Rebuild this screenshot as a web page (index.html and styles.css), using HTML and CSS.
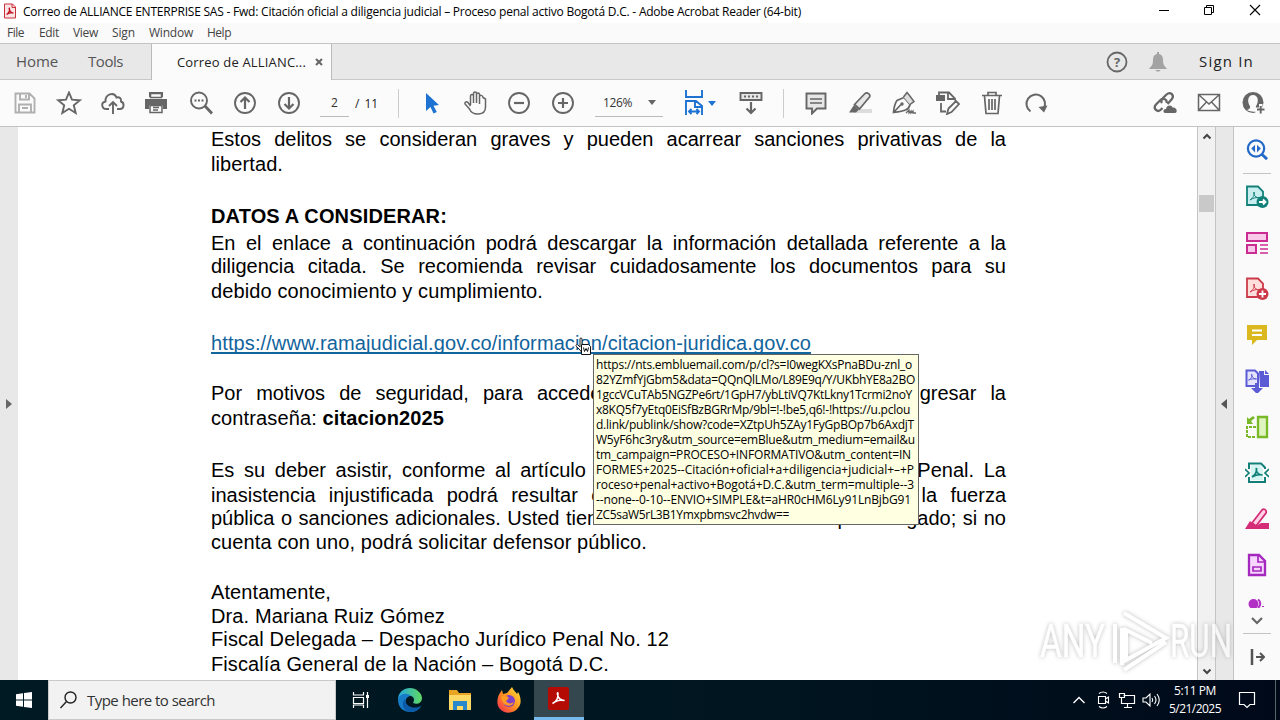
FILE: index.html
```html
<!DOCTYPE html>
<html lang="es">
<head>
  <meta charset="UTF-8">
  <title>Correo de ALLIANCE ENTERPRISE SAS - Adobe Acrobat Reader (64-bit)</title>
  <link rel="stylesheet" href="styles.css">
</head>
<body>
  <div class="desktop">
    <header class="titlebar">
      <svg class="app-icon" width="14" height="16" viewBox="0 0 14 16"><path d="M1.500 1h8l3 3v11h-11z" fill="#fbe4e4" stroke="#c8303a"/><path d="M9 1v3.500h3.500" fill="none" stroke="#c8303a"/><path d="M3.500 11.500c2-1 3.500-4 3-6-.2-1-.8 0 0 1.500.8 2 2 3 4 3-2-.8-5 .2-7 1.500z" fill="none" stroke="#c01020" stroke-width="1.200"/></svg>
      <span class="title" data-width="778">Correo de ALLIANCE ENTERPRISE SAS - Fwd: Citación oficial a diligencia judicial – Proceso penal activo Bogotá D.C. - Adobe Acrobat Reader (64-bit)</span>
      <div class="window-buttons">
        <svg width="46" height="22"><path d="M18 10.500h10" stroke="#000"/></svg>
        <svg width="46" height="22"><path d="M17.500 7.500h7v7h-7zM19.500 7.500v-2h7v7h-2" fill="none" stroke="#000"/></svg>
        <svg width="46" height="22"><path d="M17 5l10 10M27 5L17 15" stroke="#000" stroke-width="1.100"/></svg>
      </div>
    </header>

    <nav class="menubar">
      <span class="m-file" data-width="17">File</span>
      <span class="m-edit" data-width="20">Edit</span>
      <span class="m-view" data-width="25">View</span>
      <span class="m-sign" data-width="23">Sign</span>
      <span class="m-window" data-width="44">Window</span>
      <span data-width="24">Help</span>
    </nav>

    <div class="tabs">
      <div class="tab-home"><span data-width="42">Home</span></div>
      <div class="tab-tools"><span data-width="35">Tools</span></div>
      <div class="tab-doc"><span data-width="129">Correo de ALLIANC...</span><svg width="8" height="8" viewBox="0 0 8 8"><path d="M1 1l6 6M7 1L1 7" stroke="#666" stroke-width="2"/></svg></div>
      <div class="account">
        <svg width="22" height="22" viewBox="0 0 22 22"><circle cx="11" cy="11" r="9.500" fill="none" stroke="#666" stroke-width="1.800"/><text x="11" y="15.500" text-anchor="middle" class="question">?</text></svg>
        <svg class="bell" width="18" height="20" viewBox="0 0 18 20"><path d="M8 0h2v2c3 .5 4 3 4 6 0 4 1 6 3.500 8v1H.5v-1C3 14 4 12 4 8c0-3 1-5.500 4-6zM6.500 18h5c-.5 2-4.500 2-5 0z" fill="#a3a3a3"/></svg>
        <span class="sign-in" data-width="55">Sign In</span>
      </div>
    </div>

    <div class="toolbar">
      <svg class="tool light" viewBox="0 0 24 24"><path d="M2.500 2.500h14l5 5v14h-19zM7 2.500v6h9v-6M6 21.500v-8h12v8M13 4v3M9 17h6"/></svg>
      <svg class="tool" viewBox="0 0 24 24"><path d="M12 1.500l3 7.200 7.800.6-6 5 1.900 7.700-6.700-4.200L5.300 22l1.900-7.700-6-5 7.800-.6z"/></svg>
      <svg class="tool" viewBox="0 0 24 24"><path d="M8 18H5.500C.5 18-.5 11.500 4.500 10.500 4 3 13 .5 15.500 6.500c3-1 5 1 4.500 4 4 1.500 3 7.500-1 7.500H16M12 23V11.500M8 15l4-4 4 4"/></svg>
      <svg class="tool" viewBox="1 0 24 24"><path class="solid" d="M5 1h14v5H5zM1 8h22v10h-4v-4H5v4H1z"/><path d="M6 14.500h12v7H6zM9 16.500h6M9 19h5" stroke-width="1.500"/><path d="M6.500 2.500h11v4h-11z" fill="#fbfbfb" stroke-width="1.500"/></svg>
      <svg class="tool" viewBox="0 0 24 24"><circle cx="10" cy="9.500" r="8"/><path d="M16 15l7 7.500" stroke-width="2.800"/><path class="solid" d="M5.500 8.500h2v2h-2zM9 8.500h2v2H9zM12.500 8.500h2v2h-2z"/></svg>
      <svg class="tool" viewBox="0 0 24 24"><circle cx="12" cy="12" r="10"/><path d="M12 18V6.500M7.500 11L12 6.500l4.500 4.500" stroke-width="2.200"/></svg>
      <svg class="tool" viewBox="0 0 24 24"><circle cx="12" cy="12" r="10"/><path d="M12 6v11.500M7.500 13l4.500 4.500 4.500-4.500" stroke-width="2.200"/></svg>
      <div class="page-field">2</div>
      <div class="page-total"><span>/</span><span>11</span></div>
      <div class="separator"></div>
      <svg class="tool select" viewBox="0 0 24 24"><path d="M7 2l13 12-5.500.7 3.300 6.300-3.300 1.500-3-6.500L7 20z" fill="#1d72d2"/></svg>
      <svg class="tool" viewBox="0 0 24 24"><path d="M7 14V5c0-2 3-2 3 0v7V2.500c0-2 3-2 3 0V12 3.500c0-2 3-2 3 0V13 6c0-2.500 3.500-2 3.500.500L22 8v8c0 9-13 9-16 2L1.500 13C1 10.500 3.500 10.500 4.500 11.500L7 15" transform="translate(.5)" stroke-width="1.500"/></svg>
      <svg class="tool" viewBox="0 0 24 24"><circle cx="12" cy="12" r="10"/><path d="M7 12h10" stroke-width="2.200"/></svg>
      <svg class="tool" viewBox="0 0 24 24"><circle cx="12" cy="12" r="10"/><path d="M7 12h10M12 7v10" stroke-width="2.200"/></svg>
      <div class="zoom-field"><span data-width="29">126%</span><i class="caret"></i></div>
      <div class="fit">
        <svg width="22" height="26" viewBox="0 0 22 26"><path d="M2 0v7h16V0M2 25V11h10l6 5v9M11 11v6h7M5 21.500h10M7.500 19L5 21.500 7.500 24M12.500 19l2.500 2.500-2.500 2.500" fill="none" stroke="#1d72d2" stroke-width="1.900"/></svg>
        <i class="caret blue"></i>
      </div>
      <svg class="tool scrolling" viewBox="0 0 24 24"><path d="M1.500 2h21v7h-21z" fill="#e6e6e6"/><path d="M5 5.500h14" stroke-dasharray="2 2"/><path d="M12 11v11M7.500 17.500L12 22l4.500-4.500" stroke-width="2.200"/></svg>
      <div class="separator second"></div>
      <svg class="tool" viewBox="0 0 24 24"><path d="M2.500 2.500h19v15H13L8 22.500v-5H2.500z" fill="#e6e6e6"/><path d="M6 8h12M6 12h12" stroke-width="1.500"/></svg>
      <svg class="tool" viewBox="0 0 24 24"><path class="shade" d="M9 18h15v4H5z"/><path d="M6.500 13.500L17 2.500c2-2 6 1 4.500 3.500L11.500 18z" fill="#e6e6e6" stroke-width="1.700"/><path class="solid" d="M6 14l5 4.500L8 21.500H1z"/></svg>
      <svg class="tool" viewBox="0 0 24 24"><path d="M1.500 21.500C2 16 3 12 5 9.500l7-3 6 7c-1 5-4 6.500-16.500 8zM2 21l7-7.500" stroke-width="1.700"/><circle class="solid" cx="10" cy="13" r="1.700"/><path d="M11.500 6L15 1.500l2.500 3 4.500 6-4 3" fill="#ddd" stroke-width="1.500"/><path d="M14 22l3-3v3l2-2v2l2-2v2h3" stroke-width="1.300"/></svg>
      <svg class="tool" viewBox="0 0 24 24"><path class="solid" d="M0 4h9v6H0z"/><path d="M3 4V1.500h10l6 6v2M12 2v6h7M5 12v8.500h5M11 23l1.500-5.500L20 10l3 3-7.500 8z" stroke-width="1.800"/></svg>
      <svg class="tool" viewBox="0 0 24 24"><path d="M4.500 5l1.500 17.500h12L19.500 5M2 4.500h20M8 4V1.500h8V4M9 8v11M12 8v11M15 8v11" stroke-width="1.700"/></svg>
      <svg class="tool" viewBox="0 0 24 24"><path d="M6.500 20.500A9.300 9.300 0 1 1 19.500 18" stroke-width="2"/><path class="solid" d="M14.500 16L23.500 14.500l-3.500 7z"/></svg>
      <div class="tools-right">
        <svg class="tool" viewBox="0 0 24 24"><path d="M9.500 17l-1.500 1.500c-3.500 3.500-8.500-1-5-5l4.500-4.500c3-2.500 7-.5 6 3M9 12c-1.500-2-.5-3.500 1-5l3.500-3.500c4-3.500 8.500 1 5 5L14.500 13" stroke-width="2.300"/><path class="solid" d="M12.500 22c-3 0-2.500-4.500.5-4 .5-4.500 6-4.500 6.500-1.500C24 15.500 25 22 22 22z"/></svg>
        <svg class="tool" viewBox="0 0 24 24"><path d="M1.500 3.500h21v16h-21zM2 4l10 9L22 4M2 19l7.500-8M22 19l-7.500-8" stroke-width="1.500"/></svg>
        <svg class="tool" viewBox="0 0 24 24"><circle class="solid" cx="12" cy="11.500" r="10.500"/><path class="paper" d="M12 4c5.500 0 6 7 3 11-.5 1.500 0 2.500 1.500 3v2c-3 1-7 1-10.500-1 2.500-1 3.500-1.500 3-4C6 11 6.500 4 12 4zM14.500 16.500h3.500V13h3.500v3.500H25V24H14.500z"/><path d="M16 18.500h7.500M19.700 15v7.500"/></svg>
      </div>
    </div>

    <main class="content">
      <aside class="rail left"><i class="arrow-right"></i></aside>
      <article class="page">
        <p class="line full">Estos delitos se consideran graves y pueden acarrear sanciones privativas de la</p>
        <p class="line last"><span data-width="72">libertad.</span></p>

        <p class="line h27"><b data-width="236">DATOS A CONSIDERAR:</b></p>
        <p class="line full h23">En el enlace a continuación podrá descargar la información detallada referente a la</p>
        <p class="line full">diligencia citada. Se recomienda revisar cuidadosamente los documentos para su</p>
        <p class="line last"><span data-width="332">debido conocimiento y cumplimiento.</span></p>

        <p class="line link-line"><a class="link" data-width="600">https://www.ramajudicial.gov.co/informacion/citacion-juridica.gov.co</a></p>

        <p class="line full">Por motivos de seguridad, para acceder al documento deberá usted ingresar la</p>
        <p class="line last"><span data-width="233">contraseña: <b>citacion2025</b></span></p>

        <p class="line full">Es su deber asistir, conforme al artículo 175 del Código de Procedimiento Penal. La</p>
        <p class="line full h23">inasistencia injustificada podrá resultar en su conducción por medio de la fuerza</p>
        <p class="line full h24">pública o sanciones adicionales. Usted tiene derecho a estar asistido por abogado; si no</p>
        <p class="line last"><span data-width="436">cuenta con uno, podrá solicitar defensor público.</span></p>

        <p class="line h24 closing"><span data-width="120">Atentamente,</span></p>
        <p class="line h23"><span data-width="234">Dra. Mariana Ruiz Gómez</span></p>
        <p class="line"><span data-width="458">Fiscal Delegada – Despacho Jurídico Penal No. 12</span></p>
        <p class="line"><span data-width="398">Fiscalía General de la Nación – Bogotá D.C.</span></p>
      </article>
      <div class="scrollbar">
        <svg width="10" height="7" viewBox="0 0 10 7"><path d="M1.500 5.500L5 2l3.500 3.500" fill="none" stroke="#444" stroke-width="2"/></svg>
        <div class="thumb"></div>
        <svg class="down" width="10" height="7" viewBox="0 0 10 7"><path d="M1.500 1.500L5 5l3.500-3.500" fill="none" stroke="#444" stroke-width="2"/></svg>
      </div>
      <aside class="rail right"><i class="arrow-left"></i></aside>
      <aside class="side-tools">
        <svg class="side first" viewBox="0 0 24 24"><circle cx="11" cy="11" r="8.500" fill="none" stroke="#2468c8" stroke-width="2.300"/><path d="M17 17l5.500 5" stroke="#2468c8" stroke-width="3"/><path d="M10 7v8l-4-4zM12 7v8l4-4z" fill="#2468c8"/></svg>
        <svg class="side" viewBox="0 0 24 24"><path d="M2 1.500h11l5 5V20H2z" fill="#c9eef0" stroke="#128078" stroke-width="1.800"/><path d="M5 15c3-2 5-5 4-8-1 3 2 6 6 6-4-1-7 0-10 2z" fill="none" stroke="#128078"/><circle cx="17.500" cy="17" r="6" fill="#128078"/><path d="M14 17h6M18 14.500l2.500 2.500-2.500 2.500" fill="none" stroke="#fff" stroke-width="1.800"/></svg>
        <svg class="side" viewBox="0 0 24 24"><path d="M2 2h20v8H2zM2 14h9v8H2z" fill="#f9c9e9" stroke="#cb2c92" stroke-width="2"/><path d="M15 14h8M15 18h8M15 22h8" stroke="#cb2c92" stroke-width="1.300"/></svg>
        <svg class="side" viewBox="0 0 24 24"><path d="M2 1.500h11l5 5V20H2z" fill="#ffdedc" stroke="#cc3a49" stroke-width="1.800"/><path d="M5 15c3-2 5-5 4-8-1 3 2 6 6 6-4-1-7 0-10 2z" fill="none" stroke="#cc3a49"/><circle cx="17.500" cy="17" r="6" fill="#cc3a49"/><path d="M14 17h7M17.500 13.500v7" stroke="#fff" stroke-width="1.800"/></svg>
        <svg class="side" viewBox="0 0 24 24"><path d="M2 2h20v15H12l-5 5v-5H2z" fill="#dbb81d"/><path d="M7 7.500h10M7 12h10" stroke="#fff" stroke-width="1.800"/></svg>
        <svg class="side" viewBox="0 0 24 24"><path d="M10 17H1.500V1.500H10l3 3V14" fill="#e4e3fb" stroke="#5b5bd6" stroke-width="2"/><path d="M3.500 11c3-1 4-4 3-6 0 3 2 5 5 5-3-.5-5 0-8 1z" fill="none" stroke="#5b5bd6"/><path d="M14 2h5v4h5v12h-9zM20 1l4 4h-4zM10 14h4v5h4l-6 6-6-6h4z" fill="#5b5bd6"/></svg>
        <svg class="side" viewBox="0 0 24 24"><path d="M13 2h9v20h-9z" fill="#e0f4c0" stroke="#79b927" stroke-width="2.300"/><path d="M11 12H2v10h9" fill="none" stroke="#79b927" stroke-width="2" stroke-dasharray="3 1"/><path d="M2 9V2l2 2 4-3 2 2-4 3 2 3z" fill="#79b927"/></svg>
        <svg class="side" viewBox="0 0 24 24"><path d="M4 8V2.500h12l4 4V8M4 16v5h16v-5" fill="none" stroke="#128078" stroke-width="2"/><path d="M6 4h9l3 4v11H6z" fill="#d5f4f2"/><path d="M7 16c3-2 5-5 4.500-9-1 4 2 7 6 7-4-1-7 0-10.500 2zM0 8l4 4-4 4M24 8l-4 4 4 4" fill="none" stroke="#128078" stroke-width="1.700"/></svg>
        <svg class="side" viewBox="0 0 24 24"><path d="M7 16L17 3c2-2 5 0 4 3L11 19z" fill="#ffd2e5" stroke="#d42c76" stroke-width="1.800"/><path d="M5 14l6 5 5-3h8v6H0z" fill="#d42c76"/></svg>
        <svg class="side" viewBox="0 0 24 24"><path d="M4 2h10l6 6v14H4z" fill="#f6d6ff" stroke="#a428bd" stroke-width="2.300"/><path d="M13 3v6h6M8 14h8v4H8z" fill="none" stroke="#a428bd" stroke-width="1.700"/></svg>
        <svg class="side-cut" width="18" height="9" viewBox="0 0 18 9"><circle cx="5.500" cy="5" r="5" fill="#b12fc5"/><path d="M10 .5c3 2 3 6 0 8.500" fill="none" stroke="#b12fc5" stroke-width="2"/><path d="M14 7.500h2" stroke="#b12fc5"/></svg>
        <svg class="side-more" width="14" height="9" viewBox="0 0 14 9"><path d="M2 2l5 5 5-5" fill="none" stroke="#666" stroke-width="2.200"/></svg>
        <div class="side-line"></div>
        <svg class="side-expand" width="16" height="16" viewBox="0 0 16 16"><path d="M3 0v16" stroke="#555" stroke-width="2.500"/><path d="M7 8h8M11 4l4 4-4 4" fill="none" stroke="#555" stroke-width="2"/></svg>
      </aside>
    </main>

    <footer class="taskbar">
      <div class="start"><svg width="16" height="16" viewBox="0 0 16 16"><path d="M0 2.200L7 1.200V7.500H0zM8 1L16 0v7.500H8zM0 8.500h7v6.300L0 13.800zM8 8.500h8V16l-8-1z" fill="#fff"/></svg></div>
      <div class="search">
        <svg width="17" height="18" viewBox="0 0 17 18"><circle cx="10.500" cy="6.500" r="5.500" fill="none" stroke="#222" stroke-width="1.400"/><path d="M6.500 10.500L.5 17" stroke="#222" stroke-width="1.400"/></svg>
        <span data-width="128">Type here to search</span>
      </div>
      <div class="app"><svg width="18" height="18" viewBox="0 0 18 18"><path d="M1.500 1v3h10V1M1.500 6.500h10v6h-10zM1.500 17v-3h10v3M15.500 1v16" fill="none" stroke="#fff" stroke-width="1.200"/><path d="M14 4h3v3h-3z" fill="#fff"/></svg></div>
      <div class="app"><svg width="26" height="26" viewBox="0 0 26 26"><defs><linearGradient id="edge-top"><stop offset="0" stop-color="#25a8e0"/><stop offset="1" stop-color="#60d860"/></linearGradient></defs><path d="M1 13C1 5 7 1 13 1s12 5 12 10c0 5-5 7-9 5 3-5-1-8-5-7C6 9 2 11 1 13z" fill="url(#edge-top)"/><path d="M1 13c0-5 8-9 13-4-5 0-7 6-4 9s9 5 14 1c-2 4-6 6-11 6C6 25 1 20 1 13z" fill="#167cc8"/><path d="M8 12c-5 5-1 12 4 13 5 0 9-1 12-6-8 4-16 0-16-7z" fill="#0c5ba8"/></svg></div>
      <div class="app"><svg width="24" height="22" viewBox="0 0 24 22"><path d="M1 1h8l2 3h12v17H1z" fill="#e8a523"/><path d="M1 6h22v15H1z" fill="#ffd966"/><path d="M5 12h14v9h-4v-4H9v4H5z" fill="#2987cb"/></svg></div>
      <div class="app"><svg width="26" height="26" viewBox="0 0 26 26"><defs><linearGradient id="fox" x1="1" y1="0" x2="0" y2="1"><stop offset="0" stop-color="#ffe43c"/><stop offset=".5" stop-color="#ff9220"/><stop offset="1" stop-color="#f42455"/></linearGradient></defs><path d="M16 0c1 3 4 5 5 7l1-2c3 5 4 12 0 16-4 6-14 6-18 1C0 18 1 10 4 6l2-3 1 4 4-1z" fill="url(#fox)"/><circle cx="13" cy="14" r="6" fill="#8140c8"/><path d="M5 10c3-3 6-1 8 1l-3 3c2 3 5 3 8 1-2 6-12 5-13-5z" fill="#ff9a22"/></svg></div>
      <div class="app active"><svg width="21" height="23" viewBox="0 0 21 23"><rect width="21" height="23" rx="2" fill="#b50b05"/><path d="M4.500 16.500c4-1.500 6-6 5.500-10-.2-1.500-1-.5-.5 1 1 4 3.500 6 7 6-3-1-8 .5-12 3z" fill="none" stroke="#fff" stroke-width="1.500"/></svg></div>
      <div class="tray">
        <svg width="24" height="20" viewBox="0 0 24 20"><path d="M6.500 13l5.500-5.500 5.500 5.500" fill="none" stroke="#fff" stroke-width="1.400"/></svg>
        <svg width="24" height="20" viewBox="0 0 24 20"><path d="M7.500 6.500h7v7h-7zM14.500 9l3-2v6l-3-2M8 3.500q4-3 8 0M8 16.500q4 3 8 0" fill="none" stroke="#fff" stroke-width="1.100"/></svg>
        <svg width="24" height="20" viewBox="0 0 24 20"><path d="M8.500 5.500h11v8h-13v-4M12.500 14v3M9 17.500h8M4.500 3.500h5v4h-5zM6.500 8v6" fill="none" stroke="#fff" stroke-width="1.200"/></svg>
        <svg width="24" height="20" viewBox="0 0 24 20"><path d="M4 8h3l4-4v12l-4-4H4zM13 8q1.500 2 0 4M15.500 6q3 4 0 8M18 4q4.500 6 0 12" fill="none" stroke="#fff" stroke-width="1.100"/></svg>
        <div class="clock"><span data-width="42">5:11 PM</span><span data-width="52">5/21/2025</span></div>
        <svg class="notice" width="18" height="18" viewBox="0 0 18 18"><path d="M1.500 1.500h15v12H12L9 16.500l-3-3H1.500z" fill="none" stroke="#fff" stroke-width="1.200"/></svg>
        <i class="peek"></i>
      </div>
    </footer>

    <div class="tooltip">
      <span data-width="316">https://nts.embluemail.com/p/cl?s=I0wegKXsPnaBDu-znl_o</span>
      <span data-width="319">82YZmfYjGbm5&amp;data=QQnQlLMo/L89E9q/Y/UKbhYE8a2BO</span>
      <span data-width="316">1gccVCuTAb5NGZPe6rt/1GpH7/ybLtiVQ7KtLkny1Tcrmi2noY</span>
      <span data-width="314">x8KQ5f7yEtq0EiSfBzBGRrMp/9bl=!-!be5,q6!-!https://u.pclou</span>
      <span data-width="318">d.link/publink/show?code=XZtpUh5ZAy1FyGpBOp7b6AxdjT</span>
      <span data-width="319">W5yF6hc3ry&amp;utm_source=emBlue&amp;utm_medium=email&amp;u</span>
      <span data-width="315">tm_campaign=PROCESO+INFORMATIVO&amp;utm_content=IN</span>
      <span data-width="318">FORMES+2025--Citación+oficial+a+diligencia+judicial+–+P</span>
      <span data-width="318">roceso+penal+activo+Bogotá+D.C.&amp;utm_term=multiple--3</span>
      <span data-width="315">--none--0-10--ENVIO+SIMPLE&amp;t=aHR0cHM6Ly91LnBjbG91</span>
      <span data-width="193">ZC5saW5rL3B1Ymxpbmsvc2hvdw==</span>
    </div>

    <svg class="cursor" width="18" height="20" viewBox="0 0 18 20"><path d="M5 13L1.500 9.500C0 8 2 7 3 8l2 2V2c0-1.500 2-1.500 2 0v5l8 2v8H8z" fill="#fff" stroke="#222"/><path d="M6.500 7.500h7l2 2v8h-9z" fill="#fff" stroke="#111"/><path d="M8.500 10.500l1 4 1.500-3 1.500 3 1-4" fill="none" stroke="#111"/></svg>

    <svg class="watermark" width="200" height="70" viewBox="0 0 200 70">
      <text x="4" y="51" textLength="65" lengthAdjust="spacingAndGlyphs">ANY</text>
      <path d="M79 18v39M86 59V22M88 7l42 25-40 22V24l26 13M130 36L88 64"/>
      <text x="134" y="51" textLength="62" lengthAdjust="spacingAndGlyphs">RUN</text>
    </svg>
  </div>
  <script src="fit.js"></script>
</body>
</html>
```
FILE: styles.css
```css
* {
  box-sizing: border-box;
}

body {
  margin: 0;
  font-family: "Open Sans", "Noto Sans", sans-serif;
  font-size: 12px;
  color: #333;
}

svg {
  display: block;
  flex: none;
}

[data-width] {
  display: inline-block;
  white-space: pre;
}

.desktop {
  position: relative;
  display: flex;
  flex-direction: column;
  width: 1280px;
  height: 720px;
  overflow: hidden;
  background: #fff;
}

/* window frame */
.titlebar {
  display: flex;
  height: 23px;
  padding-left: 3px;
  background: #fff;
}

.app-icon {
  margin: 3px 6px 0 0;
}

.title {
  color: #000;
  line-height: 24px;
}

.window-buttons {
  display: flex;
  margin-left: auto;
  margin-right: 1px;
}

.menubar {
  display: flex;
  height: 20px;
  padding-left: 7px;
  background: #fafafa;
  line-height: 20px;
  color: #444;
}

.m-file { margin-right: 15px; }
.m-edit { margin-right: 14px; }
.m-view { margin-right: 14px; }
.m-sign { margin-right: 14px; }
.m-window { margin-right: 14px; }

.tabs {
  display: flex;
  height: 37px;
  background: #e8e8e8;
  border-top: 1px solid #c3c3c3;
  border-bottom: 1px solid #c8c8c8;
  font-size: 15px;
  line-height: 35px;
  color: #555;
}

.tab-home {
  width: 88px;
  padding-left: 16px;
}

.tab-tools {
  width: 63px;
}

.tab-doc {
  display: flex;
  align-items: center;
  gap: 9px;
  width: 181px;
  height: 36px;
  padding-left: 25px;
  background: #fbfbfb;
  border-left: 1px solid #bbb;
  border-right: 1px solid #bbb;
  font-size: 13px;
  color: #222;
}

.account {
  display: flex;
  align-items: center;
  margin-left: auto;
  padding-right: 26px;
}

.question {
  font: bold 13px "Open Sans", sans-serif;
  fill: #666;
}

.bell {
  margin: 0 32px 0 21px;
}

.sign-in {
  color: #222;
}

.toolbar {
  display: flex;
  align-items: center;
  height: 47px;
  padding-left: 3px;
  background: #fbfbfb;
  border-bottom: 1px solid #c3c3c3;
}

.tool {
  width: 44px;
  height: 24px;
  fill: none;
  stroke: #666;
  stroke-width: 1.9;
}

.tool .solid {
  fill: #666;
  stroke: none;
}

.tool .shade {
  fill: #dcdcdc;
  stroke: none;
}

.tool .paper {
  fill: #fbfbfb;
  stroke: none;
}

.light {
  stroke: #b0b0b0;
}

.select {
  stroke: none;
}

.page-field {
  width: 29px;
  height: 28px;
  margin-left: 9px;
  border-bottom: 1px solid #bbb;
  text-align: center;
  line-height: 27px;
}

.page-total {
  display: flex;
  gap: 5px;
  width: 43px;
  margin-left: 6px;
  color: #222;
}

.separator {
  width: 1px;
  height: 29px;
  margin-right: 10px;
  background: #ccc;
}

.zoom-field {
  display: flex;
  align-items: center;
  justify-content: space-between;
  width: 68px;
  height: 28px;
  margin: 0 21px 0 10px;
  padding: 0 7px 0 8px;
  border-bottom: 1px solid #bbb;
}

.caret {
  border: 4px solid transparent;
  border-top: 5px solid #666;
  border-bottom: 0;
}

.caret.blue {
  border-top-color: #1d72d2;
}

.fit {
  display: flex;
  align-items: center;
  gap: 2px;
}

.scrolling {
  margin: 0 10px 0 13px;
}

.second {
  margin-right: 10px;
}

.tools-right {
  display: flex;
  margin-left: auto;
  padding-right: 5px;
}

/* document area */
.content {
  display: flex;
  height: 553px;
}

.rail {
  display: flex;
  align-items: center;
  width: 18px;
  background: #e8e8e8;
}

.rail.left {
  padding-left: 6px;
}

.rail.right {
  padding-left: 5px;
  border-left: 1px solid #c4c4c4;
}

.arrow-right {
  border: 5px solid transparent;
  border-left: 6px solid #666;
  border-right: 0;
}

.arrow-left {
  border: 5px solid transparent;
  border-right: 6px solid #555;
  border-left: 0;
}

.page {
  width: 1179px;
  padding-left: 193px;
  background: #fff;
  font-family: "Liberation Sans", Arial, sans-serif;
  font-size: 20px;
  color: #000;
}

.line {
  width: 795px;
  height: 25px;
  margin: 0;
  line-height: 24px;
  white-space: nowrap;
}

.full {
  white-space: normal;
  text-align-last: justify;
}

.h23 { height: 23px; }
.h24 { height: 24px; }
.h27 { height: 27px; }

.last {
  margin-bottom: 27px;
}

.link-line {
  margin-bottom: 25px;
}

.closing {
  margin-top: -2px;
}

.link {
  color: #12649c;
  text-decoration: underline;
  text-decoration-thickness: 2px;
  text-decoration-skip-ink: none;
  text-underline-offset: 2px;
}

.scrollbar {
  display: flex;
  flex-direction: column;
  align-items: center;
  width: 18px;
  padding: 6px 0 5px;
  background: #f1f1f1;
  border-left: 1px solid #c4c4c4;
}

.thumb {
  width: 15px;
  height: 17px;
  margin-top: 55px;
  background: #c9c9c9;
}

.down {
  margin-top: auto;
}

.side-tools {
  display: flex;
  flex-direction: column;
  align-items: center;
  width: 47px;
  background: #fafafa;
  border-left: 1px solid #c4c4c4;
}

.side {
  width: 24px;
  height: 24px;
  margin-bottom: 22px;
}

.first {
  width: 28px;
  height: 36px;
  margin: 11px 0 11px;
  padding: 0 2px 12px;
  border-bottom: 1px solid #c4c4c4;
}

.side-more {
  margin-top: 8px;
}

.side-line {
  width: 28px;
  height: 1px;
  margin-top: 8px;
  background: #c4c4c4;
}

.side-expand {
  margin-top: 15px;
}

/* taskbar */
.taskbar {
  display: flex;
  height: 40px;
  background: linear-gradient(90deg, #001a23, #001520 60%, #000919);
  color: #fff;
}

.start {
  display: flex;
  align-items: center;
  justify-content: center;
  width: 48px;
}

.search {
  display: flex;
  align-items: center;
  gap: 10px;
  width: 288px;
  padding-left: 11px;
  background: #f2f2f2;
  border: 1px solid #c9c9c9;
  font-size: 15px;
  color: #333;
}

.app {
  display: flex;
  align-items: center;
  justify-content: center;
  width: 49.5px;
}

.active {
  background: #34464e;
  border-bottom: 3px solid #76b9ed;
}

.tray {
  display: flex;
  align-items: center;
  margin-left: auto;
}

.clock {
  display: flex;
  flex-direction: column;
  align-items: center;
  width: 64px;
  line-height: 18px;
}

.notice {
  margin: 0 19px 0 11px;
}

.peek {
  width: 5px;
  height: 40px;
  border-left: 1px solid #566;
}

/* overlays */
.tooltip {
  position: absolute;
  left: 593px;
  top: 354px;
  display: flex;
  flex-direction: column;
  align-items: flex-start;
  width: 326px;
  height: 171px;
  padding: 2px;
  border: 1px solid #666;
  background: #ffffe1;
  line-height: 15px;
  color: #000;
}

.cursor {
  position: absolute;
  left: 575px;
  top: 337px;
}

.watermark {
  position: absolute;
  left: 1036px;
  top: 606px;
  fill: none;
  stroke: #fff;
  stroke-width: 4;
  filter: drop-shadow(0 0 2px #999);
  opacity: 0.65;
}

.watermark text {
  font: 46px Roboto, sans-serif;
  fill: #fff;
  stroke-width: 0.5;
}
```
FILE: fit.js
```js
// spread each label over its nominal width
document.querySelectorAll("[data-width]").forEach(function (el) {
  const target = Number(el.dataset.width);
  const gap = (target - el.getBoundingClientRect().width) / el.textContent.length;
  el.style.letterSpacing = gap + "px";
});
```
